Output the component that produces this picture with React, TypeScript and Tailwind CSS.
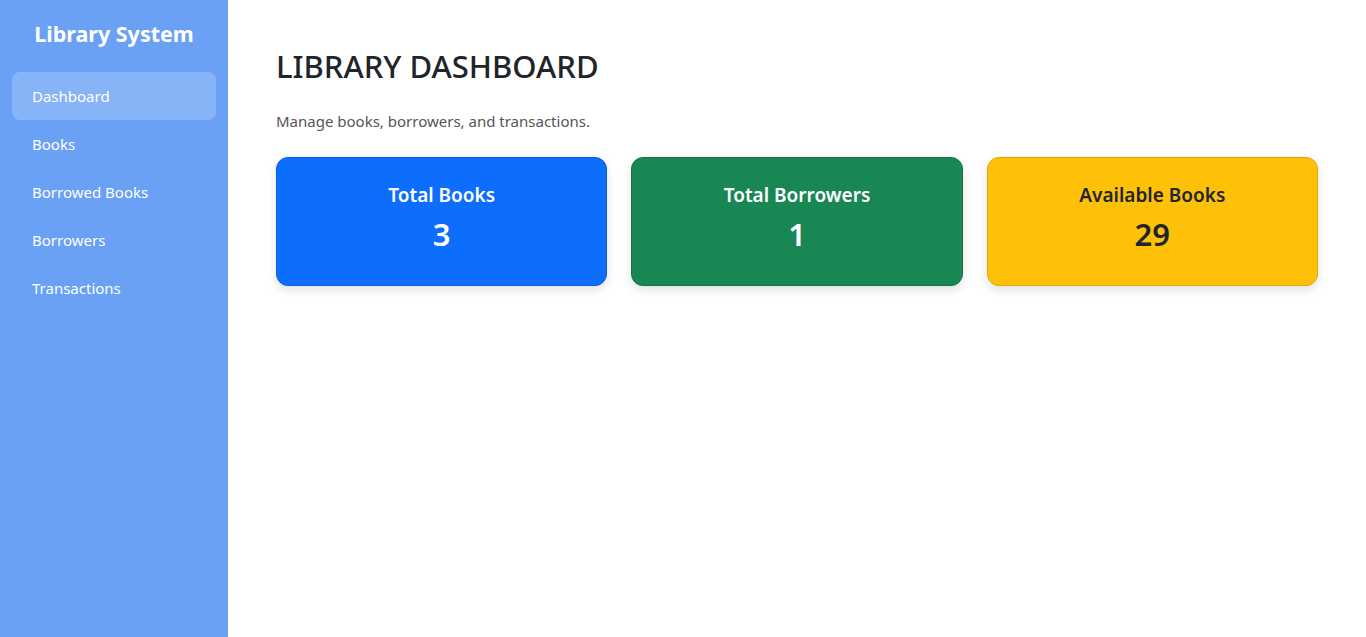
import React from 'react';

const navItems = ['Dashboard', 'Books', 'Borrowed Books', 'Borrowers', 'Transactions'];

const StatCard: React.FC<{ title: string; value: number; className: string }> = ({ title, value, className }) => (
    <div className={`flex h-[129px] flex-col items-center justify-center rounded-xl border pb-[5px] shadow-[0_4px_10px_rgba(0,0,0,0.12)] ${className}`}>
        <p className="text-[19px] font-semibold leading-tight">{title}</p>
        <p className="mt-[7px] text-[31px] font-semibold leading-tight">{value}</p>
    </div>
);

export default function App() {
    return (
        <div className="flex h-[637px] w-full font-['Noto_Sans',sans-serif]">
            <aside className="flex w-[228px] shrink-0 flex-col bg-[#6aa1f5] px-3 pt-[18px]">
                <h1 className="text-center text-[21.5px] font-bold leading-[32px] text-white">Library System</h1>
                <nav className="mt-[22px] flex flex-col">
                    {navItems.map((item, i) => (
                        <a
                            key={item}
                            href="#"
                            className={`flex h-12 items-center rounded-lg px-5 text-[15px] text-white ${i === 0 ? 'bg-white/20' : ''}`}
                        >
                            {item}
                        </a>
                    ))}
                </nav>
            </aside>

            <main className="flex-1 bg-white px-12 pt-[46px]">
                <h2 className="text-[31px] font-medium leading-[40px] text-[#212529]">LIBRARY DASHBOARD</h2>
                <p className="mt-[23px] text-[15px] leading-6 text-[#555]">Manage books, borrowers, and transactions.</p>
                <div className="mt-[24px] grid grid-cols-3 gap-6">
                    <StatCard title="Total Books" value={3} className="border-[#0b5ed7] bg-[#0d6efd] text-white" />
                    <StatCard title="Total Borrowers" value={1} className="border-[#157347] bg-[#198754] text-white" />
                    <StatCard title="Available Books" value={29} className="border-[#e0a800] bg-[#ffc107] text-[#212529]" />
                </div>
            </main>
        </div>
    );
}
